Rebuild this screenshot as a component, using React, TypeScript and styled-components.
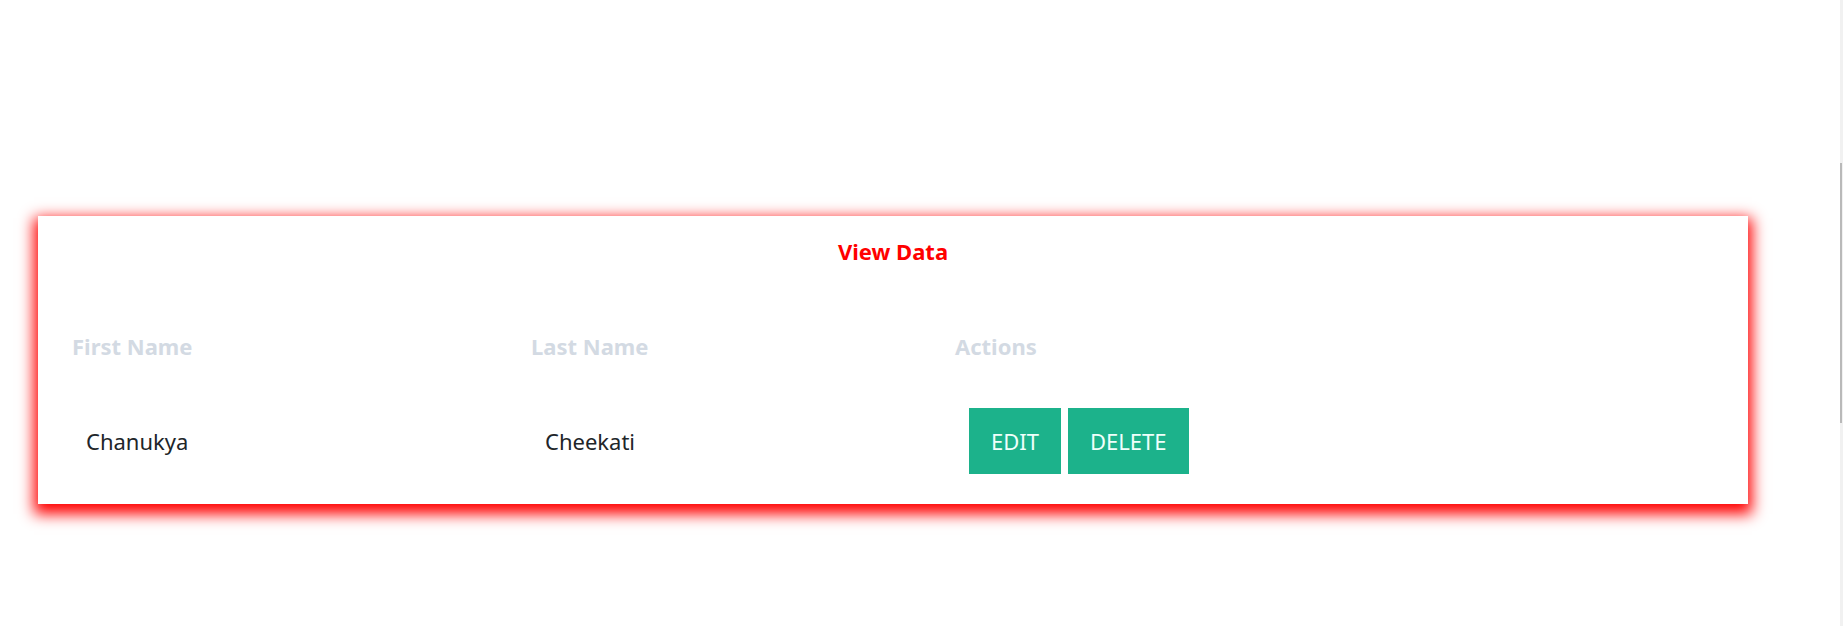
import React from 'react';
import styled, { createGlobalStyle } from 'styled-components';

const GlobalStyle = createGlobalStyle`
    html, body {
        margin: 0;
        padding: 0;
        background: #ffffff;
        font-family: "Noto Sans", "Open Sans", sans-serif;
    }
`;

const Page = styled.div`
    min-height: 626px;
    padding: 216px 0 0 38px;
    box-sizing: border-box;
`;

const Card = styled.div`
    width: 1710px;
    background: #ffffff;
    padding: 20px 0 30px;
    box-sizing: border-box;
    box-shadow: 0 6px 14px 4px #ff0000;
`;

const Title = styled.h3`
    margin: 0;
    text-align: center;
    color: #ff0000;
    font-size: 22px;
    line-height: 30px;
    font-weight: 700;
`;

const Table = styled.div`
    display: grid;
    grid-template-columns: 459px 424px 1fr;
    row-gap: 47px;
    align-items: center;
    margin-top: 65px;
    padding: 0 34px;
`;

const HeadCell = styled.div`
    color: #d3dae3;
    font-size: 22px;
    line-height: 30px;
    font-weight: 700;
`;

const Cell = styled.div`
    display: flex;
    gap: 7px;
    padding-left: 14px;
    color: #212529;
    font-size: 22px;
    line-height: 30px;
`;

const Button = styled.button`
    border: none;
    background: #1cb28b;
    color: #effffb;
    font-family: inherit;
    font-size: 22px;
    line-height: 30px;
    padding: 18px 22px;
    cursor: pointer;
`;

const ScrollEdge = styled.div`
    position: fixed;
    top: 0;
    right: 0;
    bottom: 0;
    width: 3px;
    background: #f1f1f1;
    padding-top: 163px;
    box-sizing: border-box;
`;

const ScrollThumb = styled.div`
    width: 2px;
    height: 260px;
    background: #b9b9b9;
`;

const rows = [{ firstName: 'Chanukya', lastName: 'Cheekati' }];

const App = () => {
    return (
        <Page>
            <GlobalStyle />
            <Card>
                <Title>View Data</Title>
                <Table>
                    <HeadCell>First Name</HeadCell>
                    <HeadCell>Last Name</HeadCell>
                    <HeadCell>Actions</HeadCell>
                    {rows.map((row) => (
                        <React.Fragment key={row.firstName}>
                            <Cell>{row.firstName}</Cell>
                            <Cell>{row.lastName}</Cell>
                            <Cell>
                                <Button>EDIT</Button>
                                <Button>DELETE</Button>
                            </Cell>
                        </React.Fragment>
                    ))}
                </Table>
            </Card>
            <ScrollEdge>
                <ScrollThumb />
            </ScrollEdge>
        </Page>
    );
};

export default App;
